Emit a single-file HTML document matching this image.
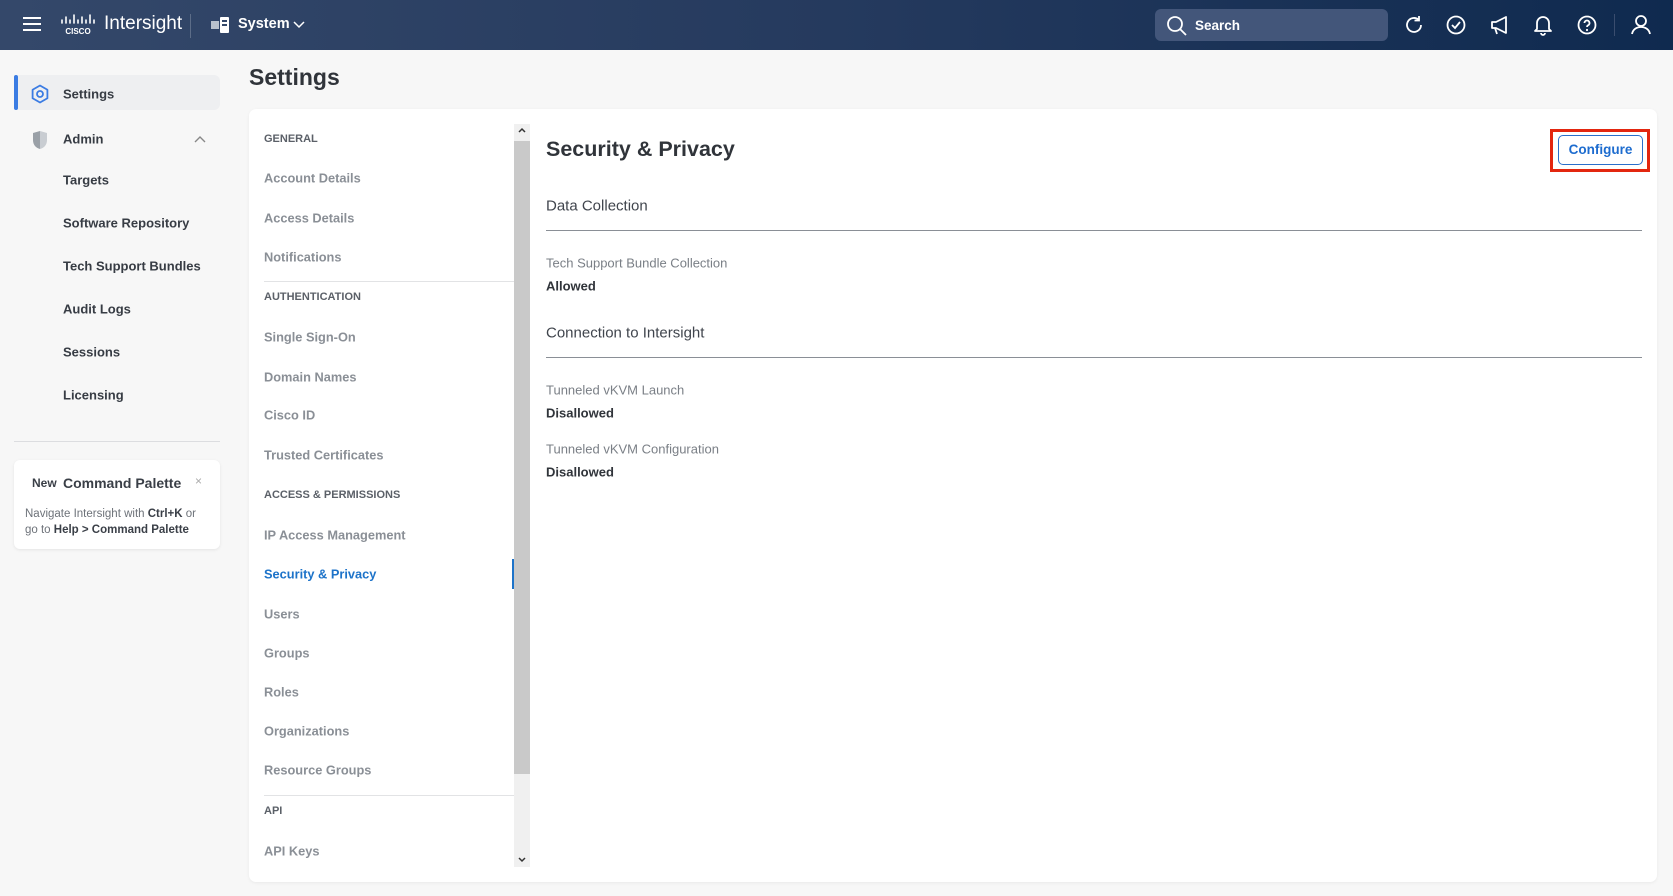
<!DOCTYPE html>
<html><head><meta charset="utf-8"><style>
*{margin:0;padding:0;box-sizing:border-box}
body{width:1673px;height:896px;overflow:hidden;background:#f7f7f7;font-family:"Liberation Sans",Arial,sans-serif;position:relative;color:#303641}
.a{position:absolute;white-space:nowrap}
.hdr{position:absolute;left:0;top:0;width:1673px;height:50px;background:linear-gradient(90deg,#34486a 0%,#253a5e 50%,#0f2a4f 100%)}
.nav{font-size:13px;color:#373c44;font-weight:bold;transform:translateY(-50%)}
.sub{font-size:12.8px;color:#8a8f96;font-weight:bold;transform:translateY(-50%)}
.cap{font-size:11px;color:#5b6068;font-weight:bold;transform:translateY(-50%)}
.lbl{font-size:13px;color:#7a7f86;transform:translateY(-50%)}
.val{font-size:13px;color:#30343a;font-weight:bold;transform:translateY(-50%)}
.sec{font-size:15px;color:#40454d;transform:translateY(-50%)}
</style></head><body>
<div class="hdr"></div>
<svg class="a" style="left:22px;top:15px" width="20" height="18"><g stroke="#fff" stroke-width="2"><line x1="1" y1="3" x2="19" y2="3"/><line x1="1" y1="9" x2="19" y2="9"/><line x1="1" y1="15" x2="19" y2="15"/></g></svg>
<svg class="a" style="left:60px;top:14px" width="36" height="22"><g stroke="#fff" stroke-width="1.6" stroke-linecap="round"><line x1="2" y1="6" x2="2" y2="9"/><line x1="6" y1="3" x2="6" y2="9"/><line x1="10" y1="6" x2="10" y2="9"/><line x1="14" y1="1" x2="14" y2="9"/><line x1="18" y1="6" x2="18" y2="9"/><line x1="22" y1="3" x2="22" y2="9"/><line x1="26" y1="6" x2="26" y2="9"/><line x1="30" y1="1" x2="30" y2="9"/><line x1="34" y1="6" x2="34" y2="9"/></g><text x="18" y="20" fill="#fff" font-size="8" font-weight="bold" text-anchor="middle" font-family="Liberation Sans">CISCO</text></svg>
<div class="a" style="left:104px;top:13px;font-size:19px;color:#fff">Intersight</div>
<div class="a" style="left:190px;top:14px;width:1px;height:24px;background:#5c6d88"></div>
<svg class="a" style="left:211px;top:16px" width="20" height="18"><rect x="0" y="5" width="8" height="8" fill="#b9c1cd"/><rect x="9" y="1" width="9" height="16" rx="1" fill="#fff"/><rect x="11" y="4" width="5" height="2" fill="#34486a"/><rect x="11" y="8" width="5" height="2" fill="#34486a"/></svg>
<div class="a" style="left:238px;top:16px;font-size:14.5px;color:#fff;font-weight:bold">System</div>
<svg class="a" style="left:292px;top:20px" width="14" height="10"><path d="M2 2l5 5 5-5" stroke="#fff" stroke-width="1.5" fill="none"/></svg>
<div class="a" style="left:1155px;top:9px;width:233px;height:32px;border-radius:6px;background:#43567a"></div>
<svg class="a" style="left:1166px;top:15px" width="22" height="22"><circle cx="9" cy="9" r="7" stroke="#fff" stroke-width="1.8" fill="none"/><line x1="14" y1="14" x2="20" y2="20" stroke="#fff" stroke-width="1.8"/></svg>
<div class="a" style="left:1195px;top:18px;font-size:13.5px;color:#fff;font-weight:bold">Search</div>
<svg class="a" style="left:1403px;top:14px" width="22" height="22"><path d="M18 11a7 7 0 1 1-2.5-5.4" stroke="#fff" stroke-width="1.8" fill="none"/><path d="M16 2v4.5h-4.5" stroke="#fff" stroke-width="1.8" fill="none"/></svg>
<svg class="a" style="left:1445px;top:14px" width="22" height="22"><circle cx="11" cy="11" r="8.5" stroke="#fff" stroke-width="1.8" fill="none"/><path d="M7 11l3 3 5-6" stroke="#fff" stroke-width="1.8" fill="none"/></svg>
<svg class="a" style="left:1489px;top:14px" width="22" height="22"><path d="M3 8h4l10-5v16L7 14H3z M6 14l2 6" stroke="#fff" stroke-width="1.8" fill="none" stroke-linejoin="round"/></svg>
<svg class="a" style="left:1532px;top:13px" width="22" height="24"><path d="M5 16V10a6 6 0 0 1 12 0v6l2 2H3z M9 20a2 2 0 0 0 4 0" stroke="#fff" stroke-width="1.8" fill="none" stroke-linejoin="round"/></svg>
<svg class="a" style="left:1576px;top:14px" width="22" height="22"><circle cx="11" cy="11" r="8.5" stroke="#fff" stroke-width="1.8" fill="none"/><path d="M8.5 9a2.5 2.5 0 1 1 3.5 2.3c-.7.4-1 .9-1 1.7" stroke="#fff" stroke-width="1.8" fill="none"/><circle cx="11" cy="16" r="1.1" fill="#fff"/></svg>
<div class="a" style="left:1614px;top:14px;width:1px;height:22px;background:#3a4d6e"></div>
<svg class="a" style="left:1630px;top:13px" width="22" height="22"><circle cx="11" cy="8" r="5" stroke="#fff" stroke-width="1.8" fill="none"/><path d="M2 21c1-5 5-7 9-7s8 2 9 7" stroke="#fff" stroke-width="1.8" fill="none"/></svg>

<div class="a" style="left:14px;top:75px;width:206px;height:35px;background:#eeeff1;border-radius:6px"></div>
<div class="a" style="left:14px;top:75px;width:4px;height:35px;background:#3b7ce3;border-radius:2px"></div>
<svg class="a" style="left:30px;top:84px" width="20" height="20"><path d="M10 1.5l7.4 4.25v8.5L10 18.5l-7.4-4.25v-8.5z" stroke="#3b7ce3" stroke-width="1.8" fill="none" stroke-linejoin="round"/><circle cx="10" cy="10" r="3" stroke="#3b7ce3" stroke-width="1.8" fill="none"/></svg>
<div class="a nav" style="left:63px;top:94px">Settings</div>
<svg class="a" style="left:31px;top:130px" width="18" height="20"><path d="M9 1L2 3v7c0 5 3 8 7 9z" fill="#9aa0a7"/><path d="M9 1l7 2v7c0 5-3 8-7 9z" fill="#c9cdd2"/></svg>
<div class="a nav" style="left:63px;top:139px">Admin</div>
<svg class="a" style="left:193px;top:135px" width="14" height="10"><path d="M2 7l5-5 5 5" stroke="#888" stroke-width="1.4" fill="none"/></svg>
<div class="a nav" style="left:63px;top:180px">Targets</div>
<div class="a nav" style="left:63px;top:223px">Software Repository</div>
<div class="a nav" style="left:63px;top:266px">Tech Support Bundles</div>
<div class="a nav" style="left:63px;top:309px">Audit Logs</div>
<div class="a nav" style="left:63px;top:352px">Sessions</div>
<div class="a nav" style="left:63px;top:395px">Licensing</div>
<div class="a" style="left:14px;top:441px;width:206px;height:1px;background:#dcdde0"></div>
<div class="a" style="left:14px;top:460px;width:206px;height:89px;background:#fff;border-radius:6px;box-shadow:0 1px 3px rgba(0,0,0,.08)"></div>
<div class="a" style="left:32px;top:476px;font-size:12px;font-weight:bold;color:#3a3f47">New</div>
<div class="a" style="left:63px;top:475px;font-size:14px;font-weight:bold;color:#3a3f47">Command Palette</div>
<div class="a" style="left:195px;top:474px;font-size:12px;color:#aaa">×</div>
<div class="a" style="left:25px;top:508px;font-size:11.5px;color:#6d7279">Navigate Intersight with <b style="color:#3a3f47">Ctrl+K</b> or</div>
<div class="a" style="left:25px;top:524px;font-size:11.5px;color:#6d7279">go to <b style="color:#3a3f47">Help &gt; Command Palette</b></div>

<div class="a" style="left:249px;top:64px;font-size:23px;font-weight:bold;color:#30343a">Settings</div>
<div class="a" style="left:249px;top:109px;width:1408px;height:773px;background:#fff;border-radius:7px;box-shadow:0 1px 3px rgba(0,0,0,.06)"></div>
<div class="a cap" style="left:264px;top:139px">GENERAL</div>
<div class="a sub" style="left:264px;top:178px">Account Details</div>
<div class="a sub" style="left:264px;top:218px">Access Details</div>
<div class="a sub" style="left:264px;top:257px">Notifications</div>
<div class="a" style="left:264px;top:281px;width:250px;height:1px;background:#e2e3e5"></div>
<div class="a cap" style="left:264px;top:297px">AUTHENTICATION</div>
<div class="a sub" style="left:264px;top:337px">Single Sign-On</div>
<div class="a sub" style="left:264px;top:377px">Domain Names</div>
<div class="a sub" style="left:264px;top:415px">Cisco ID</div>
<div class="a sub" style="left:264px;top:455px">Trusted Certificates</div>
<div class="a cap" style="left:264px;top:495px">ACCESS &amp; PERMISSIONS</div>
<div class="a sub" style="left:264px;top:535px">IP Access Management</div>
<div class="a sub" style="left:264px;top:574px;color:#1d73c9">Security &amp; Privacy</div>
<div class="a sub" style="left:264px;top:614px">Users</div>
<div class="a sub" style="left:264px;top:653px">Groups</div>
<div class="a sub" style="left:264px;top:692px">Roles</div>
<div class="a sub" style="left:264px;top:731px">Organizations</div>
<div class="a sub" style="left:264px;top:770px">Resource Groups</div>
<div class="a" style="left:264px;top:795px;width:250px;height:1px;background:#e2e3e5"></div>
<div class="a cap" style="left:264px;top:811px">API</div>
<div class="a sub" style="left:264px;top:851px">API Keys</div>
<div class="a" style="left:512px;top:559px;width:2px;height:30px;background:#1d73c9"></div>
<div class="a" style="left:514px;top:124px;width:16px;height:743px;background:#f0f0f0"></div>
<div class="a" style="left:514px;top:141px;width:16px;height:633px;background:#c9c9c9"></div>
<svg class="a" style="left:517px;top:126px" width="10" height="10"><path d="M2 6l3-3 3 3" stroke="#333" stroke-width="1.5" fill="none"/></svg>
<svg class="a" style="left:517px;top:855px" width="10" height="10"><path d="M2 3l3 3 3-3" stroke="#333" stroke-width="1.5" fill="none"/></svg>
<div class="a" style="left:546px;top:137px;font-size:21.5px;font-weight:bold;color:#30343a">Security &amp; Privacy</div>
<div class="a sec" style="left:546px;top:206px">Data Collection</div>
<div class="a" style="left:546px;top:230px;width:1096px;height:1px;background:#8a8f96"></div>
<div class="a lbl" style="left:546px;top:263px">Tech Support Bundle Collection</div>
<div class="a val" style="left:546px;top:286px">Allowed</div>
<div class="a sec" style="left:546px;top:333px">Connection to Intersight</div>
<div class="a" style="left:546px;top:357px;width:1096px;height:1px;background:#8a8f96"></div>
<div class="a lbl" style="left:546px;top:390px">Tunneled vKVM Launch</div>
<div class="a val" style="left:546px;top:413px">Disallowed</div>
<div class="a lbl" style="left:546px;top:449px">Tunneled vKVM Configuration</div>
<div class="a val" style="left:546px;top:472px">Disallowed</div>
<div class="a" style="left:1550px;top:129px;width:100px;height:43px;border:3px solid #e3260f"></div>
<div class="a" style="left:1558px;top:135px;width:85px;height:30px;border:1px solid #2a6fcb;border-radius:5px;background:#fff;font-size:13.5px;font-weight:bold;color:#1d6ccf;text-align:center;line-height:28px">Configure</div>
</body></html>
